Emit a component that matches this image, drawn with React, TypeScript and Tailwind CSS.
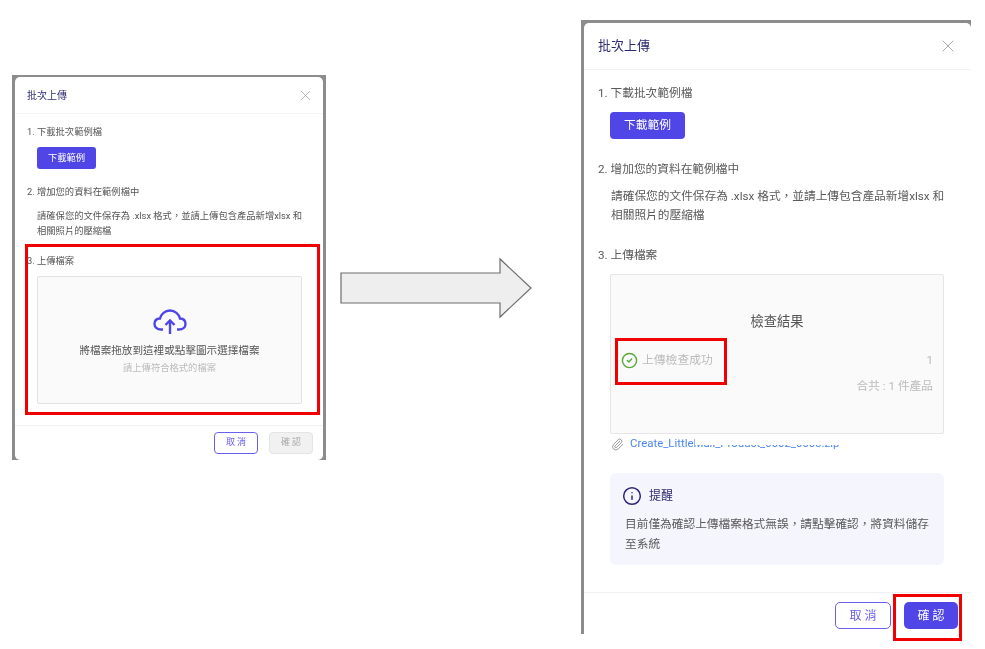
import { CircleCheck, Info, Paperclip, X } from "lucide-react";

const font = "[font-family:Roboto,'Noto_Sans_CJK_TC',sans-serif]";

const UploadCloud = () => {
  return (
    <svg className="mt-[32px] text-[#5046e8]" width="34" height="25" viewBox="0 0 34 25" fill="none" stroke="currentColor" strokeWidth="2.4">
      <path d="M10 20.5 H8 C4 20.5 1.5 18 1.5 15 C1.5 12 3.5 9.7 7 9.5 C8 5 12 1.5 17 1.5 C22 1.5 26 5 27 9.5 C30.5 9.7 32.5 12 32.5 15 C32.5 18 30 20.5 26 20.5 H24" />
      <path d="M17 25 V11.5" />
      <path d="M12.5 16 L17 11.5 L21.5 16" />
    </svg>
  );
};

const SmallDialog = () => {
  return (
    <div className="absolute left-[12px] top-[75px] h-[385px] w-[314px] bg-[#8c8c8c] px-[3px] pt-[2px]">
      <div className="h-full rounded-[5px] bg-white blur-[0.5px]">
        <div className="flex h-[37px] items-center justify-between border-b border-[#f5f5f5] pl-[12px] pr-[9px]">
          <h2 className="text-[10px] text-[#2c2a6e]">批次上傳</h2>
          <X className="h-[17px] w-[17px] text-[#9a9a9a]" strokeWidth={1} />
        </div>
        <div className="px-[12px] text-[9.3px] text-[#555]">
          <p className="mt-[12px] leading-[12px]">1. 下載批次範例檔</p>
          <button className="mt-[9px] ml-[10px] block h-[22px] w-[59px] rounded-[3px] bg-[#5046e8] text-[9.3px] text-white">
            下載範例
          </button>
          <p className="mt-[17px] leading-[12px]">2. 增加您的資料在範例檔中</p>
          <p className="mt-[10px] ml-[10px] w-[268px] leading-[15px]">
            請確保您的文件保存為 .xlsx 格式，並請上傳包含產品新增xlsx 和相關照片的壓縮檔
          </p>
          <p className="mt-[17px] leading-[12px]">3. 上傳檔案</p>
          <div className="mt-[9px] ml-[10px] flex h-[128px] w-[265px] flex-col items-center rounded-[2px] border border-[#e2e2e2] bg-[#fafafa]">
            <UploadCloud />
            <p className="mt-[10px] text-[10.6px] leading-[14px] text-[#555]">
              將檔案拖放到這裡或點擊圖示選擇檔案
            </p>
            <p className="mt-[4px] text-[9.3px] leading-[12px] text-[#bbb]">
              請上傳符合格式的檔案
            </p>
          </div>
        </div>
        <div className="mt-[21px] flex justify-end gap-[11px] border-t border-[#f0f0f0] pt-[6px] pr-[10px]">
          <button className="h-[22px] w-[44px] rounded-[4px] border border-[#6a60ee] bg-white pl-[2px] text-[9px] tracking-[2px] text-[#6a60ee]">
            取消
          </button>
          <button className="h-[22px] w-[44px] rounded-[4px] border border-[#e4e4e4] bg-[#f1f1f1] pl-[2px] text-[9px] tracking-[2px] text-[#aaa]">
            確認
          </button>
        </div>
      </div>
    </div>
  );
};

const LargeDialog = () => {
  return (
    <div className="absolute left-[581px] top-[20px] h-[614px] w-[390px] bg-[#8c8c8c] pl-[3px] pt-[3px]">
      <div className="h-full rounded-t-[5px] bg-white blur-[0.35px]">
        <div className="flex h-[47px] items-center justify-between border-b border-[#f3f3f3] pl-[14px] pr-[13px]">
          <h2 className="text-[13px] text-[#2c2a6e]">批次上傳</h2>
          <X className="h-[20px] w-[20px] text-[#9a9a9a]" strokeWidth={1} />
        </div>
        <div className="px-[14px] text-[11.7px] text-[#595959]">
          <p className="mt-[15px] leading-[17px]">1. 下載批次範例檔</p>
          <button className="mt-[10px] ml-[12px] block h-[27px] w-[75px] rounded-[4px] bg-[#5046e8] text-[11.7px] text-white">
            下載範例
          </button>
          <p className="mt-[22px] leading-[17px]">2. 增加您的資料在範例檔中</p>
          <p className="mt-[9px] ml-[13px] w-[336px] leading-[19px]">
            請確保您的文件保存為 .xlsx 格式，並請上傳包含產品新增xlsx 和相關照片的壓縮檔
          </p>
          <p className="mt-[22px] leading-[17px]">3. 上傳檔案</p>
          <div className="mt-[10px] ml-[12px] flex h-[160px] w-[334px] flex-col rounded-[2px] border border-[#e6e6e6] bg-[#fafafa] px-[10px]">
            <p className="mt-[37px] text-center text-[13.3px] leading-[20px] text-[#555]">檢查結果</p>
            <div className="mt-[20px] flex items-center justify-between">
              <div className="flex items-center gap-[4px]">
                <CircleCheck className="h-[17px] w-[17px] text-[#5aa83c]" strokeWidth={2} />
                <span className="text-[11.8px] text-[#bbb]">上傳檢查成功</span>
              </div>
              <span className="text-[11.7px] text-[#bbb]">1</span>
            </div>
            <p className="mt-[8px] text-right text-[11.7px] leading-[17px] text-[#bbb]">合共 : 1 件產品</p>
          </div>
          <div className="relative mt-[1px] flex h-[18px] items-center gap-[6px] pl-[13px]">
            <Paperclip className="h-[13px] w-[13px] text-[#8a8a8a]" strokeWidth={1.6} />
            <span className="text-[11.4px] text-[#4a86ee]">Create_LittleMall_Product_0002_0003.zip</span>
            {/* the source hides most of the file name under a white patch */}
            <div className="absolute left-[97px] top-0 h-[10px] w-[146px] bg-white" />
          </div>
          <div className="mt-[20px] ml-[12px] h-[92px] w-[334px] rounded-[6px] bg-[#f5f5fd] px-[15px]">
            <div className="flex items-center gap-[7px] pt-[13px] text-[#2c2a6e]">
              <Info className="-ml-[3px] h-[20px] w-[20px]" strokeWidth={1.8} />
              <span className="text-[12px]">提醒</span>
            </div>
            <p className="mt-[8px] leading-[20px]">
              目前僅為確認上傳檔案格式無誤，請點擊確認，將資料儲存至系統
            </p>
          </div>
        </div>
        <div className="mt-[27px] flex justify-end gap-[13px] border-t border-[#f0f0f0] pt-[9px] pr-[13px]">
          <button className="h-[27px] w-[56px] rounded-[5px] border border-[#6a60ee] bg-white pl-[3px] text-[12px] tracking-[3px] text-[#6a60ee]">
            取消
          </button>
          <button className="h-[27px] w-[54px] rounded-[5px] bg-[#5046e8] pl-[3px] text-[12px] tracking-[3px] text-white">
            確認
          </button>
        </div>
      </div>
    </div>
  );
};

const App = () => {
  return (
    <div className={`relative h-[649px] w-[985px] overflow-hidden bg-white ${font}`}>
      <SmallDialog />
      <LargeDialog />

      <svg className="absolute left-[339px] top-[257px]" width="194" height="62" viewBox="0 0 194 62">
        <path d="M2 16 H161 V2 L192 31 L161 60 V46 H2 Z" fill="#eeeeee" stroke="#6e6e6e" strokeWidth="1.2" />
      </svg>

      {/* red callouts drawn over the screenshots */}
      <div className="absolute left-[25px] top-[244px] h-[171px] w-[295px] border-[3px] border-[#f00000]" />
      <div className="absolute left-[615px] top-[338px] h-[47px] w-[112px] border-[3px] border-[#f00000]" />
      <div className="absolute left-[893px] top-[594px] h-[47px] w-[69px] border-[3px] border-[#f00000]" />
    </div>
  );
};

export default App;
